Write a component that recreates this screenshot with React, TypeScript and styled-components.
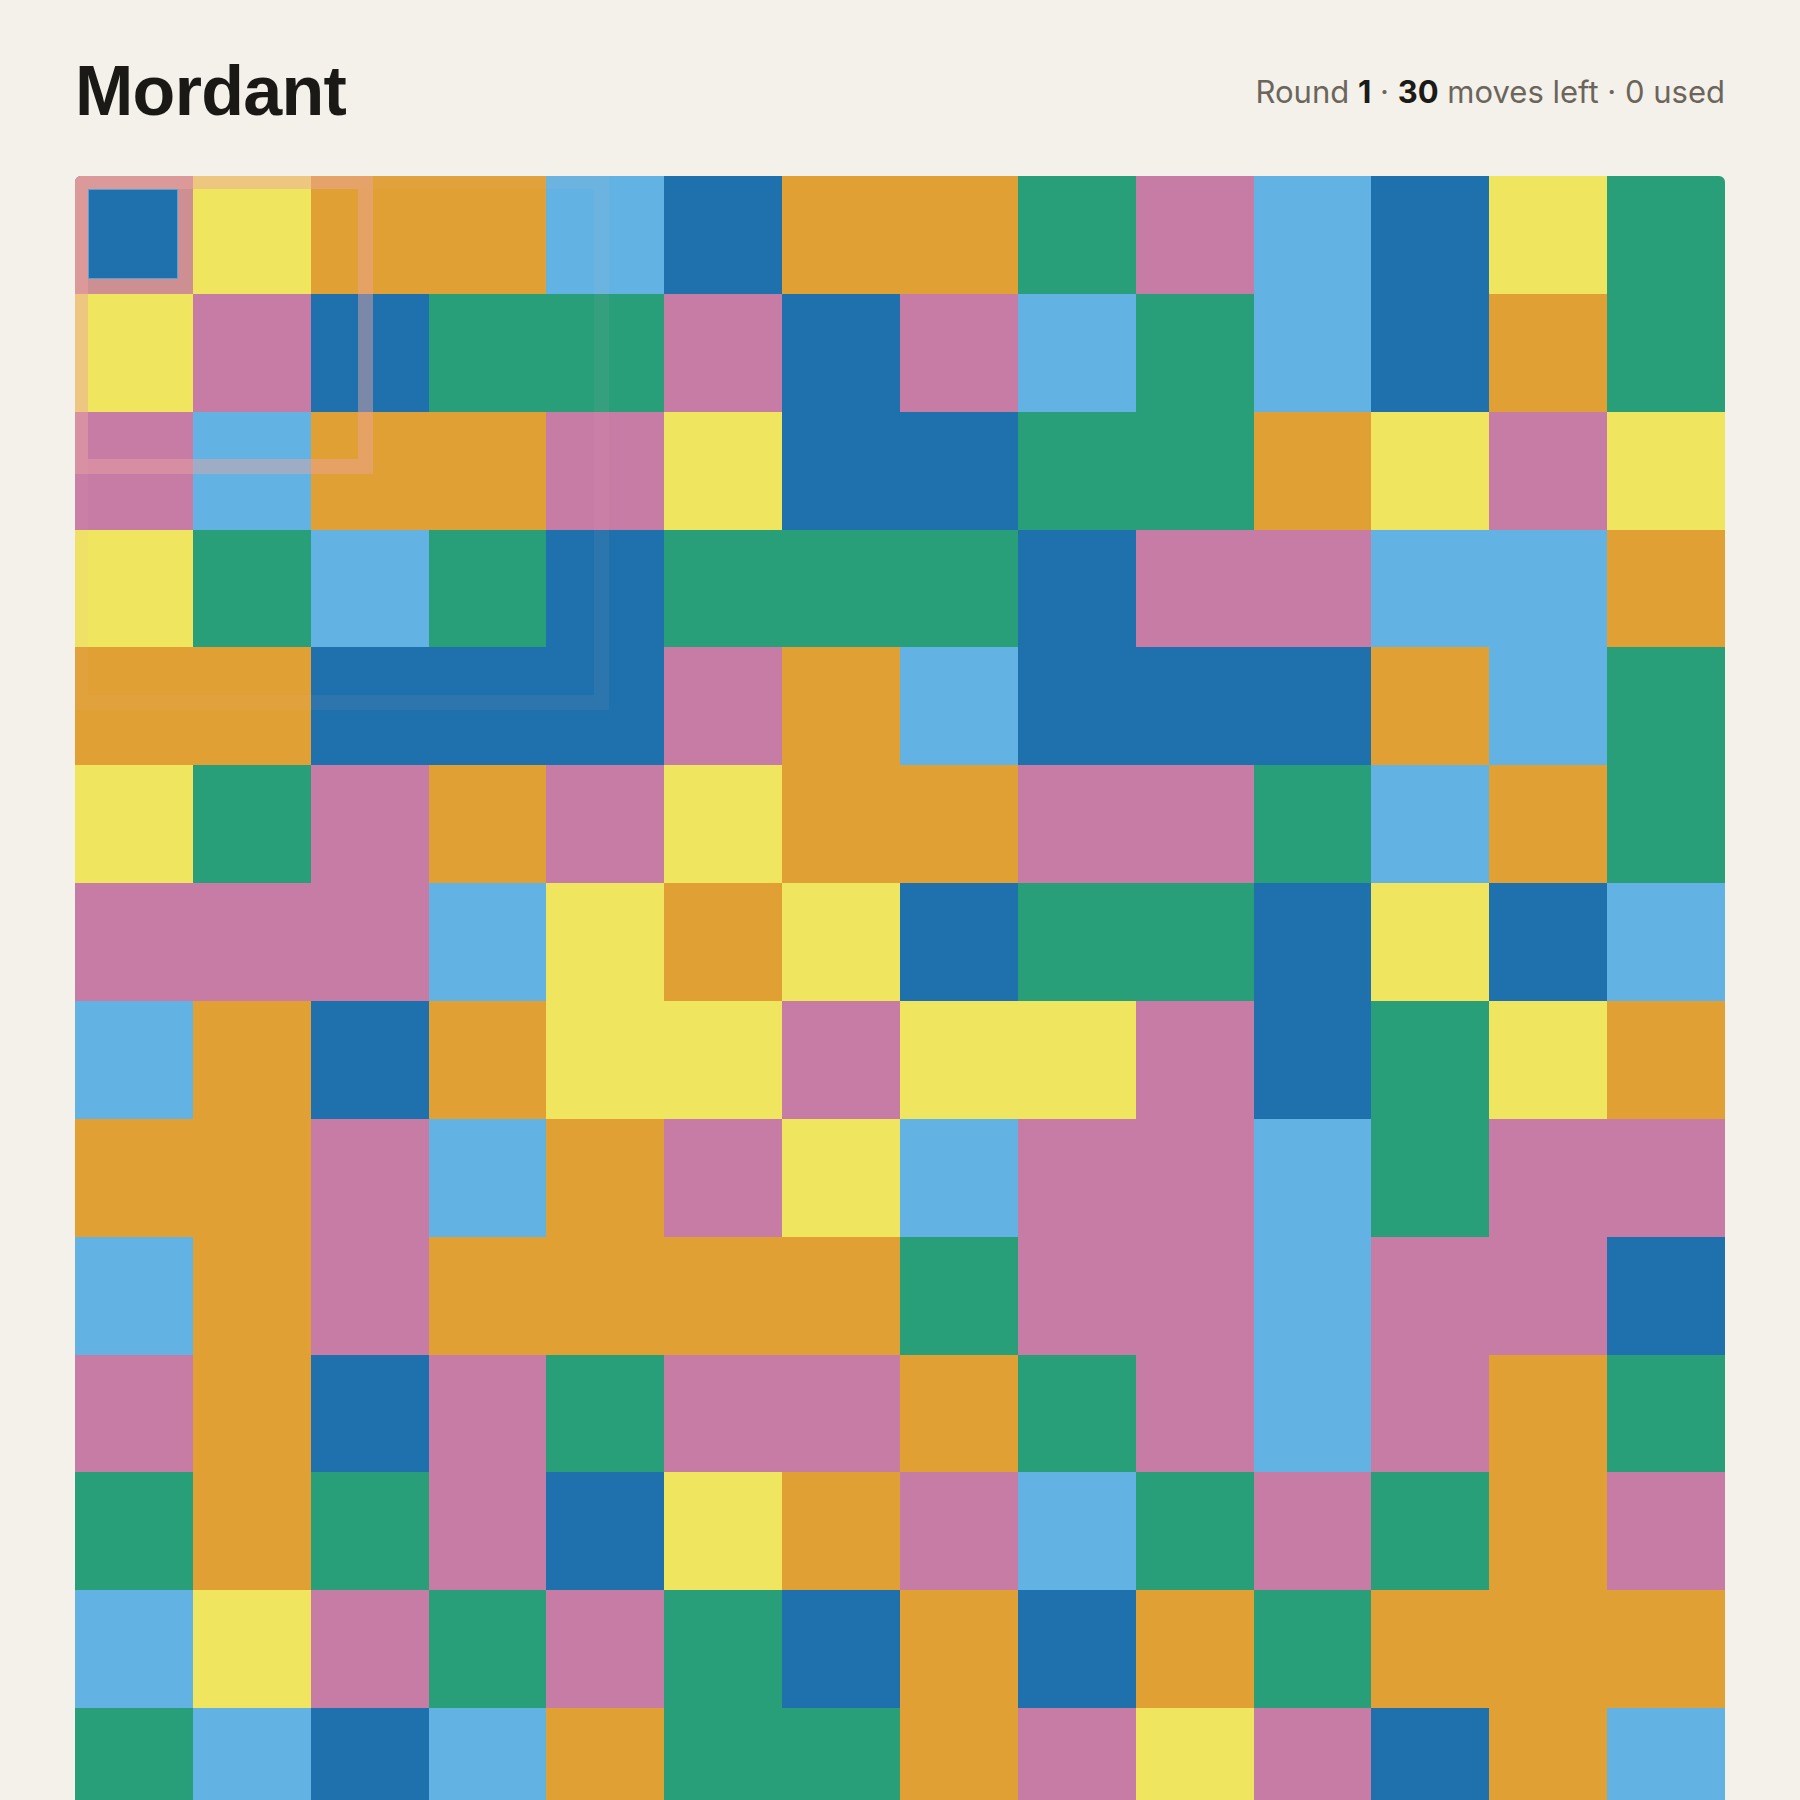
import styled, { createGlobalStyle } from "styled-components";

const GlobalStyle = createGlobalStyle`
  html, body {
    margin: 0;
    padding: 0;
    background-color: #f4f1ea;
  }
  body {
    font-family: Inter, "Liberation Sans", sans-serif;
  }
`;

const palette: Record<string, string> = {
  B: "#1f71ad",
  Y: "#efe55f",
  O: "#e0a033",
  L: "#62b3e4",
  G: "#289e79",
  P: "#c77ca5",
};

const rows = [
  "BYOOLBOOGPLBYG",
  "YPBGGPBPLGLBOG",
  "PLOOPYBBGGOYPY",
  "YGLGBGGGBPPLLO",
  "OOBBBPOLBBBOLG",
  "YGPOPYOOPPGLOG",
  "PPPLYOYBGGBYBL",
  "LOBOYYPYYPBGYO",
  "OOPLOPYLPPLGPP",
  "LOPOOOOGPPLPPB",
  "POBPGPPOGPLPOG",
  "GOGPBYOPLGPGOP",
  "LYPGPGBOBOGOOO",
  "GLBLOGGOPYPBOL",
];

// rings spreading out from the origin cell, in cells
const rings = [
  { size: 1, color: "rgba(234, 148, 140, 0.86)" },
  { size: 2.53, color: "rgba(235, 164, 160, 0.45)" },
  { size: 4.53, color: "rgba(235, 190, 180, 0.07)" },
];

export default function App() {
  return (
    <>
      <GlobalStyle />
      <Page>
        <Header>
          <Title>Mordant</Title>
          <Status>
            Round <Strong>1</Strong> · <Strong>30</Strong> moves left · 0 used
          </Status>
        </Header>
        <Board>
          {rows.map((row, r) =>
            row.split("").map((c, col) => (
              <Cell key={`${r}-${col}`} $color={palette[c]} />
            ))
          )}
          {rings.map((ring, i) => (
            <Ring
              key={i}
              $color={ring.color}
              $inner={i === 0}
              style={{ width: `${(ring.size * 100) / 14}%` }}
            />
          ))}
        </Board>
      </Page>
    </>
  );
}

const Page = styled.main`
  padding: 56px 75px 0;
`;

const Header = styled.header`
  display: flex;
  justify-content: space-between;
  align-items: center;
  margin-bottom: 50px;
`;

const Title = styled.h1`
  margin: 0;
  font-family: "Liberation Sans", Arial, sans-serif;
  font-size: 70px;
  line-height: 1;
  font-weight: 700;
  letter-spacing: -0.7px;
  color: #1a1915;
`;

const Status = styled.div`
  font-size: 31px;
  line-height: 1;
  color: #6b655c;
`;

const Strong = styled.b`
  font-weight: 700;
  color: #1c1a17;
`;

const Board = styled.div`
  position: relative;
  display: grid;
  grid-template-columns: repeat(14, 1fr);
  aspect-ratio: 1;
  border-radius: 6px;
  overflow: hidden;
`;

const Cell = styled.div<{ $color: string }>`
  background-color: ${(p) => p.$color};
`;

const Ring = styled.div<{ $color: string; $inner: boolean }>`
  position: absolute;
  top: 0;
  left: 0;
  aspect-ratio: 1;
  box-sizing: border-box;
  border-style: solid;
  border-color: ${(p) => p.$color};
  border-width: 13px 15px 15px 13px;
  box-shadow: ${(p) =>
    p.$inner ? "inset 0 0 0 1px rgba(110, 185, 230, 0.7)" : "none"};
  pointer-events: none;
`;
